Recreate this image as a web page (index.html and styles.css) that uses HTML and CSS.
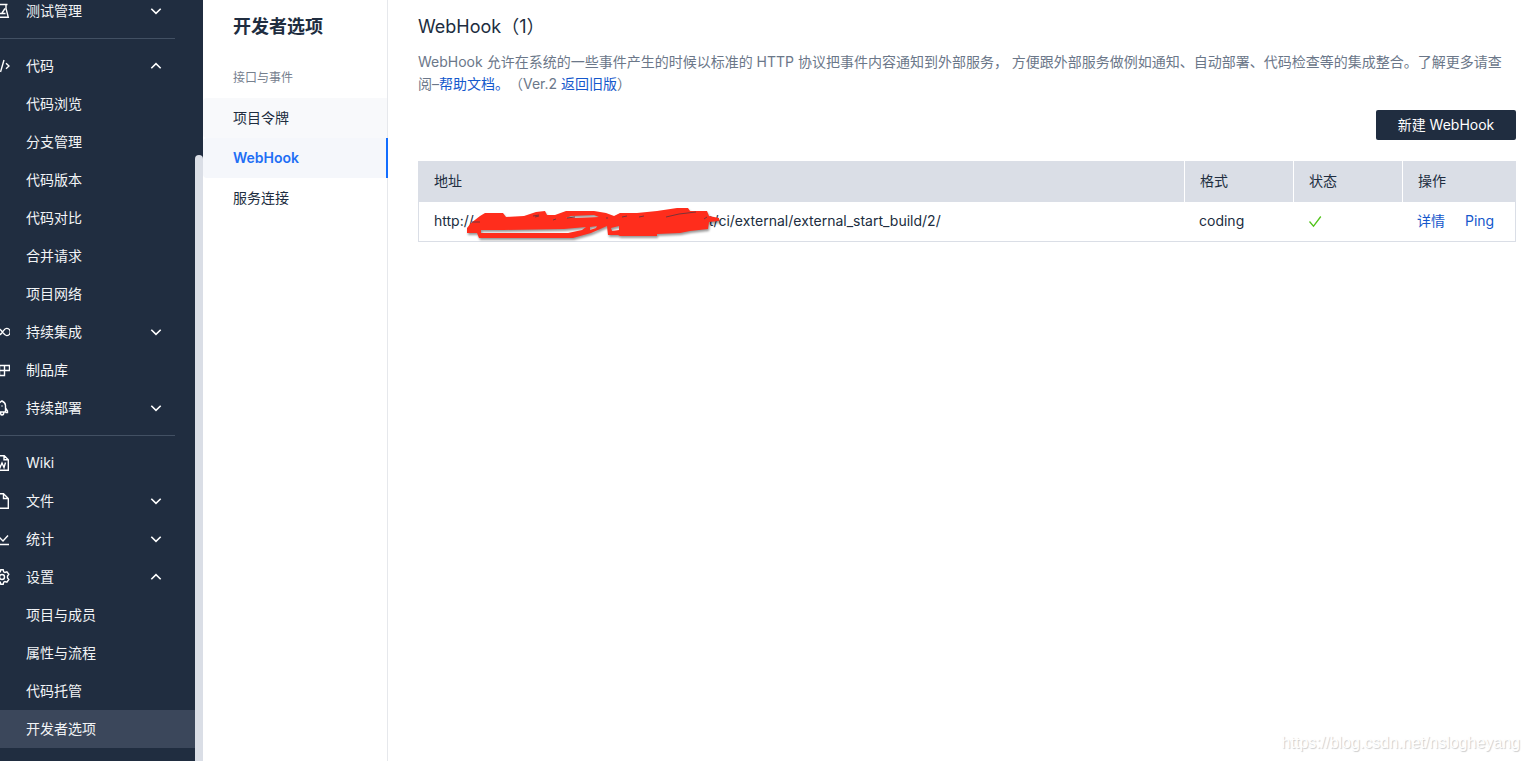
FILE: index.html
```html
<!DOCTYPE html>
<html lang="zh-CN">
<head>
<meta charset="utf-8">
<title>WebHook - 开发者选项</title>
<link rel="stylesheet" href="styles.css">
</head>
<body>
<svg class="sprite" aria-hidden="true">
  <symbol id="down" viewBox="0 0 12 12"><path d="M1.300 3.800 6 8.400l4.700-4.600"/></symbol>
  <symbol id="up" viewBox="0 0 12 12"><path d="M1.300 8.200 6 3.600l4.700 4.600"/></symbol>
</svg>
<div class="app">
  <aside class="sidebar">
    <nav class="menu">
      <a class="item" href="#"><svg class="icon" viewBox="0 0 16 16"><path d="M1 1.500h12.500M3 1.500v4L.8 14.300h13.500L12 5.500v-4M8 10l3-4.500M3 10.500h8.500"/></svg>测试管理<svg class="arrow"><use href="#down"/></svg></a>
      <hr class="rule">
      <a class="item" href="#"><svg class="icon" viewBox="0 0 16 16"><path d="M4 4.500 1 8l3 3.500M10 2 6.500 14M12 5.200 15 8l-3 2.800"/></svg>代码<svg class="arrow"><use href="#up"/></svg></a>
      <a class="item sub" href="#">代码浏览</a>
      <a class="item sub" href="#">分支管理</a>
      <a class="item sub" href="#">代码版本</a>
      <a class="item sub" href="#">代码对比</a>
      <a class="item sub" href="#">合并请求</a>
      <a class="item sub" href="#">项目网络</a>
      <a class="item" href="#"><svg class="icon" viewBox="0 0 16 16"><path d="M8.500 8C7 6 5.800 4.400 4 4.400a3.600 3.600 0 0 0 0 7.200C5.800 11.600 7 10 8.500 8s2.300-3.600 4.100-3.600a3.600 3.600 0 0 1 0 7.200c-1.800 0-2.600-1.600-4.100-3.600z"/></svg>持续集成<svg class="arrow"><use href="#down"/></svg></a>
      <a class="item" href="#"><svg class="icon" viewBox="0 0 16 16"><path d="M1 3.500h14.500V8.500H1zM1 8.500v5h9.500v-10M5.500 3.500v10"/></svg>制品库</a>
      <a class="item" href="#"><svg class="icon" viewBox="0 0 16 16"><path d="M4.500 12V5.500C4.500 3.500 6 2 8 1c2 1 3.500 2.500 3.500 4.500V12zM4.500 8 2 11v1.500h2.500M11.500 8l2 3v1.500h-2M6.500 12.500C6.500 14 7 15 8 15s1.800-1 1.800-2.500M8 5.500v1"/></svg>持续部署<svg class="arrow"><use href="#down"/></svg></a>
      <hr class="rule">
      <a class="item" href="#"><svg class="icon" viewBox="0 0 16 16"><path d="M2 .7h8.300l4 4v10.600H2zM10 .7v4h4.300M4.500 7.500l1.500 5 2-4.500 2 4.500 1.500-5"/></svg>Wiki</a>
      <a class="item" href="#"><svg class="icon" viewBox="0 0 16 16"><path d="M2 .7h7.500l4.800 4.800v9.800H2zM9.500 .7v4.800h4.800"/></svg>文件<svg class="arrow"><use href="#down"/></svg></a>
      <a class="item" href="#"><svg class="icon" viewBox="0 0 16 16"><path d="M1 13.500h14M2 9.500 5 6l4 4 5-5.500"/></svg>统计<svg class="arrow"><use href="#down"/></svg></a>
      <a class="item" href="#"><svg class="icon" viewBox="0 0 16 16"><path d="M6.300 2.800 6.800.8h2.400l.5 2 1.200.7 2-.7 1.900 2.500L13.500 7v2l1.300 1.500-1.900 2.600-2-.6-1.200.7-.5 2H6.800l-.5-2-1.200-.7-2 .6-1.900-2.600L2.500 9V7L1.200 5.300l1.900-2.500 2 .7z"/><circle cx="8" cy="8" r="2.500"/></svg>设置<svg class="arrow"><use href="#up"/></svg></a>
      <a class="item sub" href="#">项目与成员</a>
      <a class="item sub" href="#">属性与流程</a>
      <a class="item sub" href="#">代码托管</a>
      <a class="item sub active" href="#">开发者选项</a>
    </nav>
    <div class="track"><div class="thumb"></div></div>
  </aside>
  <nav class="panel">
    <h2 class="panel-title">开发者选项</h2>
    <p class="group">接口与事件</p>
    <a class="tab hover" href="#">项目令牌</a>
    <a class="tab current" href="#">WebHook</a>
    <a class="tab" href="#">服务连接</a>
  </nav>
  <main class="main">
    <h1 class="title">WebHook（1）</h1>
    <p class="intro">WebHook 允许在系统的一些事件产生的时候以标准的 HTTP 协议把事件内容通知到外部服务， 方便跟外部服务做例如通知、自动部署、代码检查等的集成整合。了解更多请查阅–<a class="link" href="#">帮助文档。</a>（Ver.2 <a class="link" href="#">返回旧版</a>）</p>
    <div class="actions"><button class="create" type="button">新建 WebHook</button></div>
    <table class="hooks">
      <thead><tr><th>地址</th><th class="col">格式</th><th class="col">状态</th><th class="col-ops">操作</th></tr></thead>
      <tbody><tr>
        <td>http://<span class="redacted"><svg class="scribble" viewBox="0 0 260 38" aria-hidden="true">
          <path class="ink" fill-rule="evenodd" d="M7 19l9-7 5-3h18l3 4 18-1 12-4 9-1 2 4h8l11-4h28l12 2 8 3 6-3 17 0 20-2 20-3h11l2 3h17l2 5 10 2v3l-10 1-1 7-18 2-10 2-23 1v2h-37l-2-1h-10l-1-9-9 4-7 3-18 5H15l-2-5H3v-5zM17 26l23 0 60-1 22-2-4 3-14 3H17zM102 14l5-2 23-1 5 2-23 1zM126 23l7-1-1 2-6 2zM147 24l8-2v4l-7 1z"/>
          <path class="trace" d="M8 18h8M69 12l6-1M71 13l4-1M89 16l3-1M103 14l8-1M143 13v2M158 13l5-1M175 13l5-1M202 13l13-3 17-2M240 15l3-2"/>
        </svg></span>t/ci/external/external_start_build/2/</td>
        <td>coding</td>
        <td><svg class="check" viewBox="0 0 14 14" role="img" aria-label="正常"><path d="m1.500 7.500 4 4.700 7.300-9.700"/></svg></td>
        <td><div class="ops"><a class="link" href="#">详情</a><a class="link" href="#">Ping</a></div></td>
      </tr></tbody>
    </table>
  </main>
  <div class="watermark">https://blog.csdn.net/nslogheyang</div>
</div>
</body>
</html>
```

FILE: styles.css
```css
* { box-sizing: border-box; }
body {
  margin: 0;
  font: 14px/22px Inter, "Noto Sans CJK SC", sans-serif;
  text-spacing-trim: space-all;
  color: #202d40;
  background: #fff;
}
a { text-decoration: none; }
.sprite { display: none; }
.app {
  position: relative;
  display: flex;
  height: 100vh;
  overflow: hidden;
}
.sidebar {
  display: flex;
  flex: none;
  width: 203px;
  overflow: hidden;
  background: #202d40;
}
.menu {
  flex: 1;
  min-width: 0;
  margin: -8px 0 0 -6px;
}
.item {
  display: flex;
  align-items: center;
  height: 38px;
  padding: 0 33px 0 0;
  color: #f2f4f6;
}
.item.sub { padding-left: 32px; }
.item.active { background: #3b475b; }
.rule {
  height: 1px;
  margin: 8px 20px 8px 0;
  border: 0;
  background: #425063;
}
.icon {
  width: 16px;
  height: 16px;
  margin-right: 16px;
  fill: none;
  stroke: #fff;
  stroke-width: 1.4;
}
.arrow {
  width: 12px;
  height: 12px;
  margin-left: auto;
  fill: none;
  stroke: #fff;
  stroke-width: 1.6;
}
.track {
  flex: none;
  width: 8px;
  padding-top: 155px;
}
.thumb {
  height: 100%;
  border-radius: 4px 4px 0 0;
  background: #dadee6;
}
.panel {
  flex: none;
  width: 185px;
  border-right: 1px solid #e6e8ec;
}
.panel-title {
  margin: 0;
  padding: 14px 30px 0;
  font-size: 18px;
  line-height: 25px;
  font-weight: 600;
}
.group {
  margin: 28px 30px 9px;
  font-size: 12px;
  line-height: 22px;
  color: #76808e;
}
.tab {
  display: block;
  margin-right: -1px;
  padding: 9px 30px;
  border-radius: 4px 0 0 4px;
  color: #202d40;
}
.tab.hover { margin-right: 0; background: #f8f9fb; }
.tab.current {
  border-right: 2px solid #126dff;
  background: #f5f7fb;
  color: #1f6ff5;
  font-weight: 600;
}
.main {
  flex: 1;
  min-width: 0;
  padding: 14px 13px 0 30px;
}
.title {
  margin: 0 0 12px;
  font-size: 18px;
  line-height: 25px;
  font-weight: 400;
}
.intro { margin: 0; color: #6b7789; }
.link { color: #1558cc; }
.actions {
  display: flex;
  justify-content: flex-end;
  margin: 15px 0 21px;
}
.create {
  width: 140px;
  height: 30px;
  padding: 0;
  border: 0;
  border-radius: 2px;
  background: #202d40;
  color: #fff;
  font: inherit;
}
.hooks {
  width: 100%;
  table-layout: fixed;
  border: 1px solid #dadee6;
  border-top: 0;
  border-spacing: 0;
}
.hooks th, .hooks td {
  height: 39px;
  padding: 0 15px 2px;
  text-align: left;
  font-weight: 400;
}
.hooks th {
  height: 41px;
  background: #dadee6;
}
.hooks th + th { border-left: 1px solid #fff; }
.col { width: 109px; }
.col-ops { width: 113px; }
.redacted {
  position: relative;
  display: inline-block;
  width: 235px;
  height: 14px;
}
.scribble {
  position: absolute;
  left: -10px;
  top: -8px;
  width: 260px;
  height: 38px;
  overflow: visible;
}
.ink {
  fill: #ff2d1c;
  filter: drop-shadow(1px 2px 1px #0006);
}
.trace { fill: none; stroke: #7c3337; stroke-width: 1; }
.check {
  display: block;
  width: 14px;
  height: 14px;
  fill: none;
  stroke: #52c41a;
  stroke-width: 1.3;
}
.ops { display: flex; gap: 20px; }
.watermark {
  position: absolute;
  right: 9px;
  bottom: 7px;
  font: 16px/22px "Liberation Sans", Arial, sans-serif;
  color: #fff;
  text-shadow: 1px 1px 1px #ccc;
}
```
